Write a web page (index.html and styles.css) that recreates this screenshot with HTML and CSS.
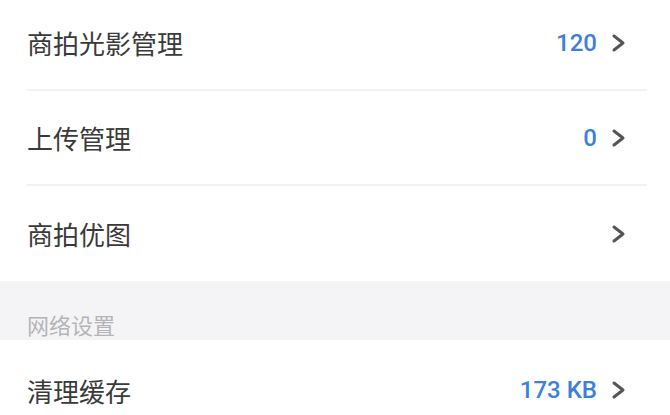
FILE: index.html
```html
<!DOCTYPE html>
<html lang="zh-CN">
  <head>
    <meta charset="UTF-8" />
    <meta name="viewport" content="width=device-width, initial-scale=1.0" />
    <title>设置</title>
    <link rel="stylesheet" href="styles.css">
  </head>
  <body>
    <div class="list">
      <div class="item">
        <span class="title">商拍光影管理</span>
        <span class="value">120</span>
        <svg class="arrow" viewBox="0 0 16 20"><path d="M3 3 L12 10 L3 17" /></svg>
      </div>
      <div class="item">
        <span class="title">上传管理</span>
        <span class="value">0</span>
        <svg class="arrow" viewBox="0 0 16 20"><path d="M3 3 L12 10 L3 17" /></svg>
      </div>
      <div class="item last">
        <span class="title">商拍优图</span>
        <svg class="arrow" viewBox="0 0 16 20"><path d="M3 3 L12 10 L3 17" /></svg>
      </div>
    </div>

    <div class="section">网络设置</div>

    <div class="list">
      <div class="item tall">
        <span class="title">清理缓存</span>
        <span class="value">173 KB</span>
        <svg class="arrow" viewBox="0 0 16 20"><path d="M3 3 L12 10 L3 17" /></svg>
      </div>
    </div>
  </body>
</html>
```

FILE: styles.css
```css
* {
  box-sizing: border-box;
}

body {
  margin: 0;
  background: #fff;
  font-family: "Noto Sans CJK SC", "Noto Sans", sans-serif;
  color: #333;
  overflow: hidden;
}

.list {
  background: #fff;
}

.list:first-child {
  margin-top: -4px;
}

.item {
  display: flex;
  align-items: center;
  height: 95px;
  margin: 0 23px 0 27px;
  padding-right: 20px;
  border-bottom: 2px solid #f2f2f2;
}

.item.last {
  border-bottom: none;
}

.item.tall {
  height: 100px;
  border-bottom: none;
}

.title {
  flex: 1;
  font-size: 26px;
  color: #3a3a3a;
}

.value {
  font-family: Roboto, "Noto Sans", sans-serif;
  font-size: 24px;
  font-weight: 500;
  color: #3d7fdc;
  margin-right: 14px;
}

.arrow {
  width: 16px;
  height: 20px;
}

.arrow path {
  fill: none;
  stroke: #555;
  stroke-width: 3;
  stroke-linecap: round;
  stroke-linejoin: round;
}

.section {
  height: 59px;
  background: #f4f4f6;
  display: flex;
  align-items: flex-end;
  padding: 0 0 0 27px;
  font-size: 22px;
  color: #b4b4b8;
}
```
